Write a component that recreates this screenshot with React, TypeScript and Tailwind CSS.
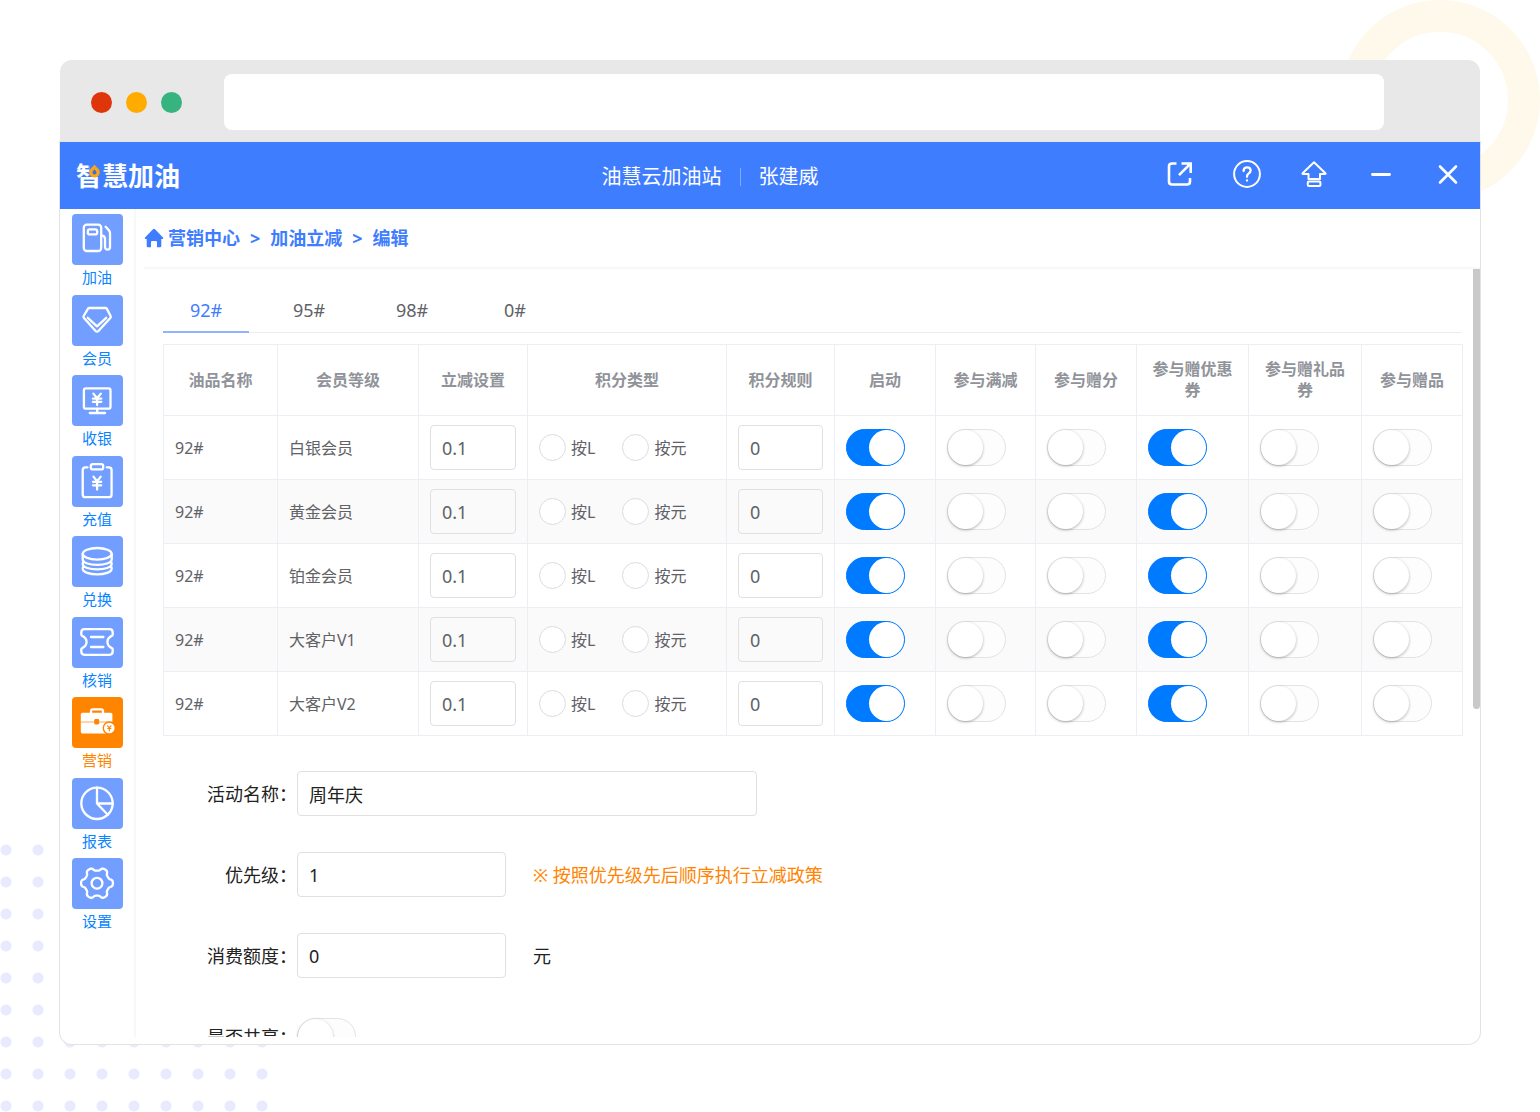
import React from 'react';

const gearPath = (() => {
  const pts: string[] = [];
  for (let i = 0; i < 180; i++) {
    const t = (i / 180) * Math.PI * 2;
    const r = 14.2 + 1.8 * Math.tanh(1.8 * Math.cos(6 * t));
    pts.push(`${(25 + r * Math.cos(t)).toFixed(2)} ${(25.2 + r * Math.sin(t)).toFixed(2)}`);
  }
  return `M${pts.join('L')}Z`;
})();

const icons: Record<string, React.ReactNode> = {
  fuel: (
    <>
      <rect x="11.8" y="10.6" width="17.4" height="26.4" rx="3" />
      <rect x="15.8" y="15.4" width="9.4" height="5" rx="2" />
      <path d="M33.6 12.8 37 16.4q1 1.2 1 2.6v14q0 2.6-2.4 2.6T33 33V25q0-3.4-3.6-3.6" />
    </>
  ),
  member: (
    <>
      <path d="M17.4 13H33.4q1 0 1.5.9L38.6 21q.6 1-.3 2L26.4 36q-1.4 1.4-2.8 0L12 23q-.9-1-.3-2L15.9 13.9q.5-.9 1.5-.9Z" />
      <path d="m15.8 22.8 9.2 8.6 9.2-8.6" />
    </>
  ),
  cashier: (
    <>
      <rect x="11.9" y="13.3" width="26.6" height="20.4" rx="2" />
      <path d="M25.2 34v3.6M17.8 38H33M21.4 18.6l3.7 4.6 3.7-4.6M25.1 23v7M20.9 23.6h8.4M20.9 26.8h8.4" />
    </>
  ),
  recharge: (
    <>
      <path d="M15.5 11.3h-2q-2.8 0-2.8 2.8v24.3q0 2.8 2.8 2.8h23.3q2.8 0 2.8-2.8V14.1q0-2.8-2.8-2.8h-2" />
      <rect x="18.8" y="8.2" width="12.4" height="5.2" rx="2" />
      <path d="m21.5 20.6 3.6 4.8 3.6-4.8M25.1 25.3v8.2M21 25.8h8.2M21 29.3h8.2" />
    </>
  ),
  exchange: (
    <>
      <ellipse cx="25.2" cy="17.8" rx="14.5" ry="5.8" />
      <path d="M10.7 17.8v5.4c0 7.6 29 7.6 29 0v-5.4M11.6 25.2q-.9 1-.9 2.5c0 7.6 29 7.6 29 0q0-1.5-.9-2.5M11.6 30q-.9 1-.9 2.5c0 7.8 29 7.8 29 0q0-1.5-.9-2.5" />
    </>
  ),
  verify: (
    <>
      <path d="M12.5 12.2h25q3.2 0 3.2 3.2v2.3q0 .8-.9 1.2c-5.8 2.6-5.8 9.6 0 12.2q.9.4.9 1.2v2.3q0 3.2-3.2 3.2h-25q-3.2 0-3.2-3.2v-2.3q0-.8.9-1.2c5.8-2.6 5.8-9.6 0-12.2q-.9-.4-.9-1.2v-2.3q0-3.2 3.2-3.2Z" />
      <path d="M19 20h12.4M19 30h12.4" />
    </>
  ),
  report: (
    <>
      <circle cx="25" cy="25.3" r="15.7" />
      <path d="M25 9.6v15.9h15.7M25 25.5l10.8 11.3" />
    </>
  ),
  setting: (
    <>
      <path d={gearPath} />
      <circle cx="25" cy="25.2" r="5.4" />
    </>
  ),
  marketing: (
    <>
      <path d="M19 15.5v-1.2q0-2 2-2h8q2 0 2 2v1.2" />
      <rect x="8.8" y="15.8" width="31.6" height="20.6" rx="1.6" fill="#fff" stroke="none" />
      <path d="M8.8 25h32" stroke="#ff8400" strokeWidth="0.7" />
      <rect x="22.2" y="22" width="5" height="5.4" rx="1.4" fill="#ff8400" stroke="none" />
      <circle cx="37.3" cy="31" r="6" fill="#fff" stroke="#ff8400" strokeWidth="1.4" />
      <path d="m35.6 28.8 1.7 2 1.7-2M37.3 31v2.8M35.7 31.5h3.2" stroke="#ff8400" strokeWidth="1.2" />
    </>
  ),
};

const menu = [
  { icon: 'fuel', label: '加油' },
  { icon: 'member', label: '会员' },
  { icon: 'cashier', label: '收银' },
  { icon: 'recharge', label: '充值' },
  { icon: 'exchange', label: '兑换' },
  { icon: 'verify', label: '核销' },
  { icon: 'marketing', label: '营销', active: true },
  { icon: 'report', label: '报表' },
  { icon: 'setting', label: '设置' },
];

const columns = [
  { title: '油品名称', width: 114 },
  { title: '会员等级', width: 141 },
  { title: '立减设置', width: 109 },
  { title: '积分类型', width: 199 },
  { title: '积分规则', width: 108 },
  { title: '启动', width: 101 },
  { title: '参与满减', width: 100 },
  { title: '参与赠分', width: 101 },
  { title: '参与赠优惠券', width: 112 },
  { title: '参与赠礼品券', width: 113 },
  { title: '参与赠品', width: 101 },
];

const levels = ['白银会员', '黄金会员', '铂金会员', '大客户V1', '大客户V2'];

const switches = [
  { title: '启动', on: true },
  { title: '参与满减', on: false },
  { title: '参与赠分', on: false },
  { title: '参与赠优惠券', on: true },
  { title: '参与赠礼品券', on: false },
  { title: '参与赠品', on: false },
];

function Switch({ label, on, id }: { label?: string; on?: boolean; id?: string }) {
  return (
    <input
      type="checkbox"
      role="switch"
      id={id}
      aria-label={label}
      defaultChecked={on}
      className="block h-[37px] w-[59px] shrink-0 cursor-pointer appearance-none rounded-full border border-[#e3e3e3] bg-[#fdfdfd] before:block before:size-[35px] before:rounded-full before:bg-white before:shadow-[0_1px_3px_rgba(0,0,0,0.3)] checked:border-[#007aff] checked:bg-[#007aff] checked:before:translate-x-[22px] checked:before:shadow-none"
    />
  );
}

function Radio({ name, label }: { name: string; label: string }) {
  return (
    <label className="flex items-center gap-[5px]">
      <input
        type="radio"
        name={name}
        className="size-[27px] appearance-none rounded-full border border-[#dcdcdc] bg-white checked:border-8 checked:border-[#007aff]"
      />
      {label}
    </label>
  );
}

function TextBox({ label, value, id, className }: { label?: string; value: string; id?: string; className: string }) {
  return (
    <input
      type="text"
      id={id}
      aria-label={label}
      defaultValue={value}
      className={`h-[45px] rounded border border-[#e0e0e0] bg-transparent px-[11px] outline-none focus:border-[#3f7dff] ${className}`}
    />
  );
}

function FormRow({ label, id, children }: { label: string; id: string; children: React.ReactNode }) {
  return (
    <div className="flex h-[45px] items-center">
      <label htmlFor={id} className="w-[134px] shrink-0 text-right">
        {label}：
      </label>
      {children}
    </div>
  );
}

function Header() {
  const action = 'flex size-7 items-center justify-center';
  const svg = {
    viewBox: '0 0 28 28',
    className: 'size-7',
    fill: 'none',
    stroke: 'currentColor',
    strokeWidth: 2,
    strokeLinecap: 'round' as const,
    strokeLinejoin: 'round' as const,
    'aria-hidden': true,
  };
  return (
    <header className="flex h-[67px] shrink-0 items-center bg-[#3f7dff] pr-[18px] text-white">
      <div className="w-[38.2%] shrink-0 pl-4">
        <span className="relative inline-block text-[26px] leading-8 font-bold">
          智慧加油
          <svg viewBox="0 0 16 16" className="absolute top-[3px] left-2.5 size-4" aria-hidden>
            <rect x="4" y="0" width="12" height="13.500" fill="#3f7dff" />
            <path d="M8.500 1.500C10 4 13.800 6 13.800 9.300a5.300 5.300 0 0 1-10.600 0C3.200 6 7 4 8.500 1.500Z" fill="#f9a41b" />
            <path d="M8.500 6.600q2 1.500 2 3a2 2 0 0 1-4 0q0-1.500 2-3Z" fill="#3f6fd0" />
          </svg>
        </span>
      </div>
      <div className="flex items-center pt-0.5 pl-1.5 text-xl whitespace-nowrap">
        <span>油慧云加油站</span>
        <span className="mx-[18px] h-[18px] w-px bg-[#7fa8ff]" />
        <span>张建威</span>
      </div>
      <div className="ml-auto flex items-center gap-[39px] pb-[3px]">
        <button type="button" aria-label="打开" className={action}>
          <svg {...svg} strokeWidth="2.6" strokeLinecap="butt">
            <path d="M10.5 3.5H6Q3 3.5 3 6.5v15q0 3 3 3h15q3 0 3-3V18M15.5 3.5H24.7V13M24 4.2 13 15.2" strokeLinejoin="miter" />
          </svg>
        </button>
        <button type="button" aria-label="帮助" className={action}>
          <svg {...svg}>
            <circle cx="14" cy="14" r="12.9" />
            <path d="M10.6 11q0-3.6 3.5-3.6t3.5 3.2q0 1.600-1.800 2.800T14 16.4v.4M14 20.3v.3" strokeWidth="2.3" />
          </svg>
        </button>
        <button type="button" aria-label="升级" className={action}>
          <svg {...svg}>
            <path d="M14 2.2 25.4 13.2q.6.9-.5.9H20v4.8H8.5v-4.8H3.1q-1.1 0-.5-.9Z" />
            <rect x="7.8" y="21.5" width="12.6" height="4.6" rx="1" />
          </svg>
        </button>
        <button type="button" aria-label="最小化" className={action}>
          <svg {...svg} strokeWidth="2.8">
            <path d="M5.5 14.5h17" />
          </svg>
        </button>
        <button type="button" aria-label="关闭" className={action}>
          <svg {...svg} strokeWidth="2.6">
            <path d="m6 6.5 16 16M22 6.5l-16 16" />
          </svg>
        </button>
      </div>
    </header>
  );
}

function Sidebar() {
  return (
    <nav className="w-[76px] shrink-0 border-r-2 border-[#f8f8f8] pt-[5px]">
      <ul className="grid h-[725px] auto-rows-fr">
        {menu.map((m) => (
          <li key={m.label}>
            <a
              href="#"
              className={`flex flex-col items-center text-[15px] leading-6 ${m.active ? 'text-[#ff8400]' : 'text-[#0a84ff]'}`}
            >
              <span className={`size-[51px] rounded ${m.active ? 'bg-[#ff8400]' : 'bg-[#729fff]'}`}>
                <svg
                  viewBox="0 0 51 51"
                  className="size-[51px]"
                  fill="none"
                  stroke="#fff"
                  strokeWidth="2.3"
                  strokeLinecap="round"
                  strokeLinejoin="round"
                  aria-hidden
                >
                  {icons[m.icon]}
                </svg>
              </span>
              {m.label}
            </a>
          </li>
        ))}
      </ul>
    </nav>
  );
}

function RuleTable() {
  const cell = 'border border-[#ebeef5] px-[11px]';
  return (
    <table className="mt-[11px] w-full table-fixed border-collapse text-base text-[#606266]">
      <colgroup>
        {columns.map((c) => (
          <col key={c.title} style={{ width: c.width }} />
        ))}
      </colgroup>
      <thead>
        <tr className="h-[71px]">
          {columns.map((c) => (
            <th key={c.title} scope="col" className={`${cell} leading-[21px] font-bold text-[#909399]`}>
              {c.title}
            </th>
          ))}
        </tr>
      </thead>
      <tbody>
        {levels.map((level) => (
          <tr key={level} className="h-16 even:bg-[#fafafa]">
            <td className={cell}>92#</td>
            <td className={cell}>{level}</td>
            <td className={cell}>
              <TextBox label={`${level}立减设置`} value="0.1" className="block w-full text-lg" />
            </td>
            <td className={cell}>
              <div className="flex gap-[27px]">
                <Radio name={level} label="按L" />
                <Radio name={level} label="按元" />
              </div>
            </td>
            <td className={cell}>
              <TextBox label={`${level}积分规则`} value="0" className="block w-full text-lg" />
            </td>
            {switches.map((s) => (
              <td key={s.title} className={cell}>
                <Switch label={`${level}${s.title}`} on={s.on} />
              </td>
            ))}
          </tr>
        ))}
      </tbody>
    </table>
  );
}

export default function App() {
  return (
    <div className="relative flex h-screen flex-col overflow-hidden bg-white px-[60px] pt-[60px] pb-[68px] font-['Noto_Sans','Noto_Sans_CJK_SC',sans-serif]">
      <div className="absolute top-0 right-0 size-[200px] rounded-full border-[32px] border-[#fff9eb]" />
      <div className="absolute bottom-0 left-0 size-[268px] bg-[radial-gradient(circle_at_6px_6px,#e8ebfe_5px,transparent_6px)] bg-[length:32px_32px]" />

      <div className="relative flex min-h-0 flex-1 flex-col">
        <div className="flex shrink-0 items-center rounded-t-xl bg-[#e8e8e8] pt-3.5 pr-24 pb-3 pl-[31px]">
          <div className="flex gap-3.5">
            <span className="size-[21px] rounded-full bg-[#de350b]" />
            <span className="size-[21px] rounded-full bg-[#ffab00]" />
            <span className="size-[21px] rounded-full bg-[#36b37e]" />
          </div>
          <input type="text" aria-label="地址栏" className="ml-[42px] h-14 min-w-0 flex-1 rounded-lg bg-white px-4 outline-none" />
        </div>

        <div className="flex min-h-0 flex-1 flex-col overflow-hidden rounded-b-xl bg-white pb-[7px] shadow-[0_0_0_1px_#e3e3e3]">
          <Header />
          <div className="flex min-h-0 flex-1">
            <Sidebar />
            <main className="flex min-w-0 flex-1 flex-col pl-2">
              <nav
                aria-label="面包屑"
                className="flex h-[60px] shrink-0 items-center border-b-2 border-[#f8f8f8] text-lg font-bold text-[#3f7dff]"
              >
                <svg viewBox="0 0 20 20" className="mr-1 size-5" fill="currentColor" aria-hidden>
                  <path d="M9 1.2q1-.9 2 0l8 8.2q.9 1.2-.5 1.5h-1.2v7q0 1.3-1.3 1.3h-3v-5q0-1.2-1.2-1.2H8.2Q7 13 7 14.2v5H4q-1.3 0-1.3-1.3v-7H1.5q-1.4-.3-.5-1.5Z" />
                </svg>
                <div className="flex items-center gap-2.5">
                  <a href="#">营销中心</a>
                  <span>&gt;</span>
                  <a href="#">加油立减</a>
                  <span>&gt;</span>
                  <span>编辑</span>
                </div>
              </nav>

              <div className="relative min-h-0 flex-1 overflow-hidden pt-5 pr-[18px] pl-[19px]">
                <div className="absolute top-0 right-0 h-[440px] w-[7px] rounded-b bg-[#c9c9c9]" />
                <div role="tablist" className="flex gap-[17px] border-b border-[#ececec] text-lg text-[#606266]">
                  {['92#', '95#', '98#', '0#'].map((t, i) => (
                    <button
                      key={t}
                      type="button"
                      role="tab"
                      aria-selected={i === 0}
                      className={`-mb-px h-11 w-[86px] border-b-2 ${i === 0 ? 'border-[#8fb3ff] text-[#3f7dff]' : 'border-transparent'}`}
                    >
                      {t}
                    </button>
                  ))}
                </div>

                <RuleTable />

                <form className="flex flex-col gap-9 pt-[35px] text-lg text-[#222]">
                  <FormRow label="活动名称" id="activity-name">
                    <TextBox id="activity-name" value="周年庆" className="w-[460px]" />
                  </FormRow>
                  <FormRow label="优先级" id="priority">
                    <TextBox id="priority" value="1" className="w-[209px]" />
                    <span className="ml-[27px] text-[#ff8400]">※ 按照优先级先后顺序执行立减政策</span>
                  </FormRow>
                  <FormRow label="消费额度" id="amount">
                    <TextBox id="amount" value="0" className="w-[209px]" />
                    <span className="ml-[27px]">元</span>
                  </FormRow>
                  <FormRow label="是否共享" id="shared">
                    <Switch id="shared" />
                  </FormRow>
                </form>
              </div>
            </main>
          </div>
        </div>
      </div>
    </div>
  );
}
